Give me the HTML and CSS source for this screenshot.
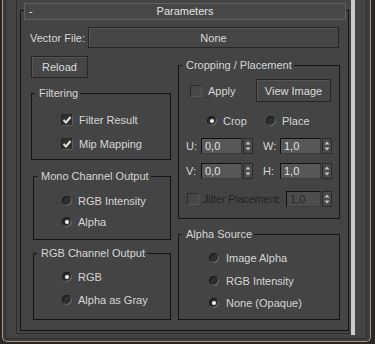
FILE: index.html
```html
<!DOCTYPE html>
<html lang="en">
<head>
  <meta charset="UTF-8">
  <title>Parameters</title>
  <link rel="stylesheet" href="styles.css">
</head>
<body>
  <div class="window">
    <div class="panel">
      <div class="view">
        <div class="clip">
          <div class="rollout">
            <div class="rollout-head">
              <span class="toggle">-</span>
              <span class="title">Parameters</span>
            </div>
            <div class="rollout-body">

              <!-- Vector file -->
              <div class="file-row">
                <span class="file-label">Vector File:</span>
                <button class="btn btn-file">None</button>
              </div>

              <div class="columns">
                <div class="col-left">
                  <button class="btn btn-reload">Reload</button>

                  <fieldset class="group group-filter">
                    <legend>Filtering</legend>
                    <div class="opt">
                      <span class="check on"><svg width="10" height="10" viewBox="0 0 10 10"><path d="M1.5 5 L4 7.5 L8.5 2" fill="none" stroke="#dcdcdc" stroke-width="2"/></svg></span>
                      Filter Result
                    </div>
                    <div class="opt">
                      <span class="check on"><svg width="10" height="10" viewBox="0 0 10 10"><path d="M1.5 5 L4 7.5 L8.5 2" fill="none" stroke="#dcdcdc" stroke-width="2"/></svg></span>
                      Mip Mapping
                    </div>
                  </fieldset>

                  <fieldset class="group group-mono">
                    <legend>Mono Channel Output</legend>
                    <div class="opt"><span class="radio"></span>RGB Intensity</div>
                    <div class="opt"><span class="radio on"></span>Alpha</div>
                  </fieldset>

                  <fieldset class="group group-rgb">
                    <legend>RGB Channel Output</legend>
                    <div class="opt"><span class="radio on"></span>RGB</div>
                    <div class="opt"><span class="radio"></span>Alpha as Gray</div>
                  </fieldset>
                </div>

                <div class="col-right">
                  <fieldset class="group group-crop">
                    <legend>Cropping / Placement</legend>
                    <div class="apply-row">
                      <span class="check off"></span>
                      <span class="apply-label">Apply</span>
                      <button class="btn btn-view">View Image</button>
                    </div>
                    <div class="crop-row">
                      <span class="crop-opt"><span class="radio on"></span>Crop</span>
                      <span class="crop-opt"><span class="radio"></span>Place</span>
                    </div>
                    <div class="spin-row spin-u">
                      <span class="spin-label">U:</span>
                      <span class="field">0,0</span>
                      <span class="spin"><svg width="8" height="14" viewBox="0 0 8 14"><path d="M4 2.5 L6.5 5.5 L1.5 5.5 Z" fill="#c6c6c6"/><path d="M1.5 8.5 L6.5 8.5 L4 11.5 Z" fill="#c6c6c6"/></svg></span>
                      <span class="spin-label spin-label-2">W:</span>
                      <span class="field">1,0</span>
                      <span class="spin"><svg width="8" height="14" viewBox="0 0 8 14"><path d="M4 2.5 L6.5 5.5 L1.5 5.5 Z" fill="#c6c6c6"/><path d="M1.5 8.5 L6.5 8.5 L4 11.5 Z" fill="#c6c6c6"/></svg></span>
                    </div>
                    <div class="spin-row spin-v">
                      <span class="spin-label">V:</span>
                      <span class="field">0,0</span>
                      <span class="spin"><svg width="8" height="14" viewBox="0 0 8 14"><path d="M4 2.5 L6.5 5.5 L1.5 5.5 Z" fill="#c6c6c6"/><path d="M1.5 8.5 L6.5 8.5 L4 11.5 Z" fill="#c6c6c6"/></svg></span>
                      <span class="spin-label spin-label-2">H:</span>
                      <span class="field">1,0</span>
                      <span class="spin"><svg width="8" height="14" viewBox="0 0 8 14"><path d="M4 2.5 L6.5 5.5 L1.5 5.5 Z" fill="#c6c6c6"/><path d="M1.5 8.5 L6.5 8.5 L4 11.5 Z" fill="#c6c6c6"/></svg></span>
                    </div>
                    <div class="spin-row jitter-row">
                      <span class="check off"></span>
                      <span class="disabled jitter-label">Jitter Placement:</span>
                      <span class="field field-off">1,0</span>
                      <span class="spin"><svg width="8" height="14" viewBox="0 0 8 14"><path d="M4 2.5 L6.5 5.5 L1.5 5.5 Z" fill="#c6c6c6"/><path d="M1.5 8.5 L6.5 8.5 L4 11.5 Z" fill="#c6c6c6"/></svg></span>
                    </div>
                  </fieldset>

                  <fieldset class="group group-alpha">
                    <legend>Alpha Source</legend>
                    <div class="opt"><span class="radio"></span>Image Alpha</div>
                    <div class="opt"><span class="radio"></span>RGB Intensity</div>
                    <div class="opt"><span class="radio on"></span>None (Opaque)</div>
                  </fieldset>
                </div>
              </div>

            </div>
          </div>
        </div>
      </div>
      <div class="scroll"><div class="thumb"></div></div>
    </div>
  </div>
</body>
</html>
```

FILE: styles.css
```css
* {
  box-sizing: border-box;
}
body {
  margin: 0;
  background-color: #2b2621;
  font-family: "Liberation Sans", Arial, sans-serif;
  font-size: 11px;
  color: #d6d6d6;
}
.window {
  margin-left: 2px;
  width: 369px;
  height: 342px;
  border: 1px solid #a39883;
  border-top: 0;
  border-radius: 0 0 5px 5px;
  background-color: #3d3d3d;
  padding: 0 3px 2px 2px;
}
.panel {
  height: 100%;
  display: flex;
  background-color: #444444;
  border: 1px solid #2e2e2e;
  border-top: 0;
}
.view {
  flex: 1;
  padding-left: 10px;
}
.clip {
  height: 334px;
  border-left: 1px solid #2c2c2c;
  border-bottom: 1px solid #2c2c2c;
  padding: 3px 0 0 3px;
}
.scroll {
  width: 16px;
  padding-left: 1px;
}
.thumb {
  width: 4px;
  height: 335px;
  background-color: #cacaca;
}

/* rollout */
.rollout {
  width: 329px;
}
.rollout-head {
  position: relative;
  z-index: 1;
  height: 17px;
  margin: 0 3px 0 4px;
  border: 1px solid #5f5f5f;
  background-color: #474747;
  display: grid;
  grid-template-columns: 20px 1fr 20px;
  align-items: center;
  line-height: 15px;
  color: #e2e2e2;
}
.toggle {
  padding-left: 4px;
}
.title {
  text-align: center;
}
.rollout-body {
  margin-top: -10px;
  height: 321px;
  border: 1px solid #141414;
  padding: 16px 8px 0 9px;
}

/* buttons */
.btn {
  font: inherit;
  color: #dcdcdc;
  background-color: #464646;
  border: 1px solid #262626;
  box-shadow: inset 1px 1px 0 #555555;
  padding: 0;
}
.file-row {
  display: flex;
  align-items: center;
  height: 21px;
}
.file-label {
  width: 58px;
}
.btn-file {
  width: 251px;
  height: 21px;
}
.btn-reload {
  display: block;
  width: 57px;
  height: 22px;
  margin-left: 1px;
}
.btn-view {
  width: 75px;
  height: 23px;
  margin-left: auto;
  margin-right: 1px;
}

.columns {
  display: flex;
  gap: 7px;
  margin-top: 8px;
}
.col-left {
  width: 141px;
}
.col-right {
  width: 162px;
}

/* group boxes */
.group {
  margin: 0;
  min-width: 0;
  border: 1px solid #141414;
  padding-left: 0;
  padding-right: 0;
}
.group legend {
  padding: 0 2px 0 4px;
  margin-left: 3px;
  line-height: 13px;
  white-space: nowrap;
}
.group-filter {
  margin: 9px 0 0 1px;
  padding-top: 10px;
  padding-bottom: 5px;
}
.group-filter .opt {
  margin-left: 29px;
}
.group-mono {
  margin: 10px 0 0 3px;
  padding-top: 8px;
  padding-bottom: 7px;
}
.group-rgb {
  margin: 7px 0 0 3px;
  padding-top: 7px;
  padding-bottom: 9px;
}
.group-mono .opt,
.group-rgb .opt {
  margin-left: 28px;
}
.group-crop {
  margin-top: 3px;
  padding-top: 7px;
  padding-bottom: 11px;
}
.group-crop > div {
  margin-left: 7px;
  margin-right: 7px;
}
.group-alpha {
  margin-top: 9px;
  padding-top: 7px;
  padding-bottom: 6px;
}
.group-alpha .opt {
  margin-left: 30px;
  gap: 7px;
}

.opt {
  display: flex;
  align-items: center;
  height: 20px;
  gap: 6px;
}
.group-filter .opt + .opt {
  margin-top: 4px;
}
.group-mono .opt + .opt {
  margin-top: 1px;
}
.group-rgb .opt + .opt {
  margin-top: 3px;
}
.group-alpha .opt:nth-child(3) {
  margin-top: 3px;
}
.group-alpha .opt:nth-child(4) {
  margin-top: 2px;
}

/* checkbox and radio */
.check {
  width: 12px;
  height: 12px;
  flex: none;
  display: flex;
  align-items: center;
  justify-content: center;
  border: 1px solid #262626;
  border-right-color: #5a5a5a;
  border-bottom-color: #5a5a5a;
}
.check.on {
  background-color: #303030;
}
.check.off {
  background-color: #474747;
  border-color: #2a2a2a #575757 #575757 #2a2a2a;
}
.radio {
  width: 10px;
  height: 10px;
  flex: none;
  border-radius: 50%;
  background-color: #2e2e2e;
  box-shadow: inset -1px -1px 0 #6c6c6c, inset 1px 1px 0 #1a1a1a;
  display: flex;
  align-items: center;
  justify-content: center;
}
.radio.on::after {
  content: "";
  width: 4px;
  height: 4px;
  border-radius: 50%;
  background-color: #f2f2f2;
}

/* cropping rows */
.apply-row {
  display: flex;
  align-items: center;
  height: 23px;
}
.apply-row .check {
  margin-left: 4px;
}
.apply-label {
  margin-left: 6px;
}
.crop-row {
  display: flex;
  align-items: center;
  height: 20px;
  margin-top: 9px;
  padding-left: 21px;
}
.crop-opt {
  display: flex;
  align-items: center;
  gap: 6px;
  width: 59px;
}
.spin-row {
  display: flex;
  align-items: center;
  height: 17px;
}
.spin-u {
  margin-top: 6px;
}
.spin-v {
  margin-top: 8px;
}
.jitter-row {
  margin-top: 11px;
}
.spin-label {
  width: 15px;
}
.spin-label-2 {
  width: 17px;
  margin-left: 10px;
}
.field {
  width: 41px;
  height: 16px;
  padding-left: 3px;
  line-height: 14px;
  color: #e2e2e2;
  background-color: #575757;
  border: 1px solid #111111;
  border-right-color: #3a3a3a;
  border-bottom-color: #3a3a3a;
}
.field-off {
  width: 35px;
  margin-left: auto;
  color: #2a2a2a;
  background-color: #4c4c4c;
}
.spin {
  width: 10px;
  height: 16px;
  margin-left: 1px;
  display: flex;
  background-color: #4a4a4a;
  border: 1px solid #2a2a2a;
}
.jitter-row .check {
  margin-left: 1px;
}
.disabled {
  color: #222222;
  text-shadow: 1px 1px 0 #4a4a4a;
}
.jitter-label {
  margin-left: 4px;
  letter-spacing: -0.25px;
  white-space: nowrap;
}
```
